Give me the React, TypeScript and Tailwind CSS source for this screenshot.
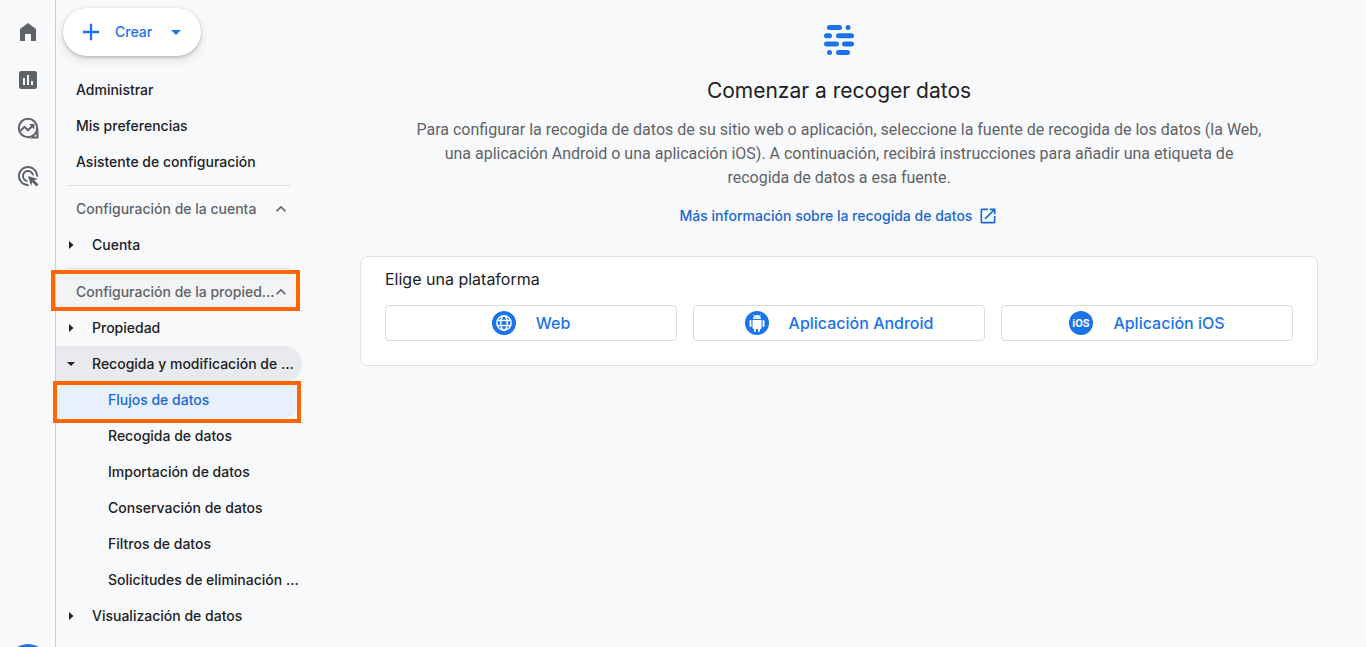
import React from 'react';
import { MdAdsClick, MdAdd, MdArrowDropDown, MdInsertChart, MdKeyboardArrowUp, MdOpenInNew } from 'react-icons/md';

const HomeIcon = () => (
  <svg viewBox="0 0 24 24" className="size-6" fill="currentColor">
    <path d="M4 21V9l8-6 8 6v12h-5v-7H9v7z" />
  </svg>
);

const ExploreIcon = () => (
  <svg viewBox="0 0 24 24" className="size-6" fill="none" stroke="currentColor" strokeWidth="2">
    <circle cx="12" cy="12" r="9.2" />
    <path d="M4.500 14.800l4-4 3.500 3.500 5-5" />
    <path d="M13 8h5.500v5.500z" fill="currentColor" stroke="none" />
    <path d="M22.500 12v10.500H12c3-.5 5-1.500 7-3.500s3-4 3.500-7z" fill="currentColor" stroke="none" />
    <circle cx="19.500" cy="19.800" r="1" fill="#f8f9fb" stroke="none" />
  </svg>
);

const StreamsLogo = () => (
  <svg viewBox="0 0 32 32" className="size-8" fill="#1a73e8">
    <rect x="4" y="1" width="15" height="5" rx="2.500" />
    <circle cx="25" cy="3.500" r="2.500" />
    <rect x="1" y="9.300" width="8" height="5" rx="2.500" />
    <rect x="13" y="9.300" width="18" height="5" rx="2.500" />
    <rect x="1" y="17.600" width="15" height="5" rx="2.500" />
    <rect x="19" y="17.600" width="12" height="5" rx="2.500" />
    <circle cx="6.500" cy="28.500" r="2.500" />
    <rect x="13" y="26" width="14" height="5" rx="2.500" />
  </svg>
);

const WebIcon = () => (
  <svg viewBox="0 0 24 24" className="size-6" fill="none" stroke="#fff" strokeWidth="1.400">
    <circle cx="12" cy="12" r="12" fill="#1a73e8" stroke="none" />
    <circle cx="12" cy="12" r="7.200" />
    <ellipse cx="12" cy="12" rx="3.200" ry="7.200" />
    <path d="M5.500 9.500h13M5.500 14.500h13" />
  </svg>
);

const AndroidIcon = () => (
  <svg viewBox="0 0 24 24" className="size-6" fill="#fff">
    <circle cx="12" cy="12" r="12" fill="#1a73e8" />
    <path d="M8 8c0-2.500 1.800-4 4-4s4 1.500 4 4z" />
    <path d="M9.300 5L8.300 3.400M14.700 5l1-1.600" stroke="#fff" strokeWidth="0.700" />
    <path d="M7.500 9h9v8a1 1 0 0 1-1 1H15v2a1 1 0 0 1-2 0v-2h-2v2a1 1 0 0 1-2 0v-2h-.5a1 1 0 0 1-1-1z" />
    <rect x="4.500" y="9" width="2" height="7" rx="1" />
    <rect x="17.500" y="9" width="2" height="7" rx="1" />
    <circle cx="10.300" cy="6.300" r=".5" fill="#1a73e8" />
    <circle cx="13.700" cy="6.300" r=".5" fill="#1a73e8" />
  </svg>
);

const IosIcon = () => (
  <svg viewBox="0 0 24 24" className="size-6">
    <circle cx="12" cy="12" r="12" fill="#1a73e8" />
    <text x="12" y="16" textAnchor="middle" fill="#fff" fontSize="11" fontWeight="700" fontFamily="Roboto, sans-serif">
      iOS
    </text>
  </svg>
);

const RAIL = [
  { label: 'Inicio', icon: <HomeIcon /> },
  { label: 'Informes', icon: <MdInsertChart className="size-6" /> },
  { label: 'Explorar', icon: <ExploreIcon /> },
  { label: 'Publicidad', icon: <MdAdsClick className="size-6" /> },
];

const PLATFORMS = [
  { label: 'Web', icon: <WebIcon /> },
  { label: 'Aplicación Android', icon: <AndroidIcon /> },
  { label: 'Aplicación iOS', icon: <IosIcon /> },
];

const Divider = () => <hr className="my-[5px] ml-3 mr-3 border-[#dadce0]" />;

const NavLink: React.FC<{ label: string; nested?: boolean }> = ({ label, nested }) => (
  <a href="#" className={`flex h-9 items-center whitespace-nowrap ${nested ? 'pl-[52px]' : 'pl-5'}`}>
    {label}
  </a>
);

const SectionHeader: React.FC<{ label: string; marked?: boolean }> = ({ label, marked }) => (
  <button
    className={`relative flex h-9 w-full items-center justify-between whitespace-nowrap pl-5 pr-[11px] text-[#5f6368] ${
      marked ? 'rounded-r-full bg-[#f1f3f4]' : ''
    }`}
  >
    <span className="min-w-0">{label}</span>
    <MdKeyboardArrowUp className="size-5 shrink-0" />
    {marked && <span className="absolute -bottom-px -left-[5px] -top-1 right-0.5 border-4 border-[#ff6600]" />}
  </button>
);

const Group: React.FC<{ label: string; open?: boolean }> = ({ label, open }) => (
  <button
    aria-expanded={!!open}
    className={`flex h-9 w-full items-center whitespace-nowrap pl-2.5 ${open ? 'rounded-r-full bg-[#e8eaed]' : ''}`}
  >
    <svg viewBox="0 0 10 10" className="mr-4 size-2.5 shrink-0" fill="currentColor">
      {open ? <path d="M1 3h8L5 7z" /> : <path d="M3 1v8l4.500-4z" />}
    </svg>
    {label}
  </button>
);

export default function App() {
  return (
    <div className="flex h-screen overflow-hidden bg-[#f8f9fb] font-['Inter',sans-serif] text-[#202124]">
      <aside className="flex w-14 shrink-0 flex-col items-center gap-6 border-r border-[#cdcfd2] pt-5 text-[#5f6368]">
        {RAIL.map(({ label, icon }) => (
          <a key={label} href="#" aria-label={label}>
            {icon}
          </a>
        ))}
        <button aria-label="Ayuda" className="-mb-[37px] mt-auto size-10 shrink-0 rounded-full bg-[#1a73e8]" />
      </aside>

      <nav className="w-[246px] shrink-0 pt-2 text-sm font-medium">
        <button className="mb-4 ml-[7px] flex h-12 w-[138px] items-center rounded-full bg-white pl-3.5 text-[#1a73e8] shadow-[0_1px_3px_rgba(60,64,67,0.3),0_4px_8px_rgba(60,64,67,0.15)]">
          <MdAdd className="mr-2.5 size-7" />
          Crear
          <MdArrowDropDown className="ml-3 size-6" />
        </button>
        <NavLink label="Administrar" />
        <NavLink label="Mis preferencias" />
        <NavLink label="Asistente de configuración" />
        <Divider />
        <SectionHeader label="Configuración de la cuenta" />
        <Group label="Cuenta" />
        <Divider />
        <SectionHeader label="Configuración de la propied..." marked />
        <Group label="Propiedad" />
        <Group label="Recogida y modificación de ..." open />
        <a
          href="#"
          aria-current="page"
          className="relative flex h-9 items-center rounded-r-full bg-[#e8f0fe] pl-[52px] text-[#1967d2]"
        >
          Flujos de datos
          <span className="absolute -bottom-[5px] -left-[3px] -top-px right-px border-4 border-[#ff6600]" />
        </a>
        <NavLink label="Recogida de datos" nested />
        <NavLink label="Importación de datos" nested />
        <NavLink label="Conservación de datos" nested />
        <NavLink label="Filtros de datos" nested />
        <NavLink label="Solicitudes de eliminación ..." nested />
        <Group label="Visualización de datos" />
      </nav>

      <main className="flex min-w-0 flex-1 flex-col items-center pl-[58px] pr-12 pt-6">
        <StreamsLogo />
        <h1 className="mt-5 text-[21px] leading-[30px]">Comenzar a recoger datos</h1>
        <p className="mt-3 max-w-[850px] text-center font-['Roboto',sans-serif] text-base leading-6 text-[#5f6368]">
          Para configurar la recogida de datos de su sitio web o aplicación, seleccione la fuente de recogida de los
          datos (la Web, una aplicación Android o una aplicación iOS). A continuación, recibirá instrucciones para
          añadir una etiqueta de recogida de datos a esa fuente.
        </p>
        <a href="#" className="mt-4 flex items-center gap-1.5 text-sm font-medium text-[#1967d2]">
          Más información sobre la recogida de datos
          <MdOpenInNew className="size-5" />
        </a>

        <section className="mt-[30px] w-full rounded-lg border border-[#dfe1e5] bg-white px-6 pb-6 pt-2.5">
          <h2 className="text-base leading-6">Elige una plataforma</h2>
          <div className="mt-3.5 grid grid-cols-3 gap-4">
            {PLATFORMS.map(({ label, icon }) => (
              <button
                key={label}
                className="flex h-9 items-center justify-center gap-5 rounded border border-[#dadce0] font-medium text-[#1a73e8]"
              >
                {icon}
                {label}
              </button>
            ))}
          </div>
        </section>
      </main>
    </div>
  );
}
